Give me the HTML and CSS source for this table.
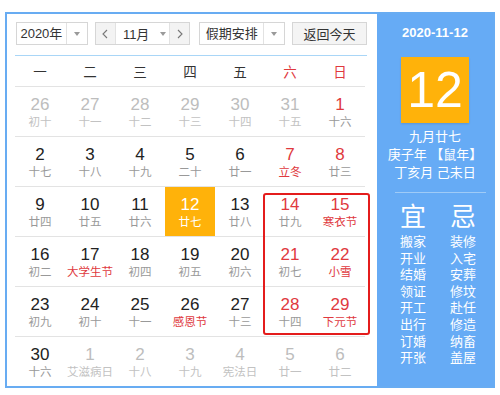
FILE: index.html
```html
<!DOCTYPE html>
<html lang="zh-CN">
<head>
<meta charset="utf-8">
<link rel="stylesheet" href="styles.css">
</head>
<body>
<div class="cal">
  <div class="main">
    <div class="toolbar">
      <div class="sel sel-year"><span class="sel-text">2020年</span><span class="sel-arrow"><i class="tri"></i></span></div>
      <div class="sel sel-month">
        <span class="nav"><svg width="6" height="10" viewBox="0 0 6 10"><polyline points="5,1 1,5 5,9" fill="none" stroke="#777" stroke-width="1.1"/></svg></span>
        <span class="month-text">11月<i class="tri"></i></span>
        <span class="nav"><svg width="6" height="10" viewBox="0 0 6 10"><polyline points="1,1 5,5 1,9" fill="none" stroke="#777" stroke-width="1.1"/></svg></span>
      </div>
      <div class="sel sel-hol"><span class="sel-text">假期安排</span><span class="sel-arrow"><i class="tri"></i></span></div>
      <div class="btn">返回今天</div>
    </div>
    <div class="weekdays">
      <span>一</span><span>二</span><span>三</span><span>四</span><span>五</span><span class="red">六</span><span class="red">日</span>
    </div>
    <div class="grid">
      <div class="cell other"><b>26</b><small>初十</small></div>
      <div class="cell other"><b>27</b><small>十一</small></div>
      <div class="cell other"><b>28</b><small>十二</small></div>
      <div class="cell other"><b>29</b><small>十三</small></div>
      <div class="cell other"><b>30</b><small>十四</small></div>
      <div class="cell other"><b>31</b><small>十五</small></div>
      <div class="cell wk"><b>1</b><small>十六</small></div>

      <div class="cell"><b>2</b><small>十七</small></div>
      <div class="cell"><b>3</b><small>十八</small></div>
      <div class="cell"><b>4</b><small>十九</small></div>
      <div class="cell"><b>5</b><small>二十</small></div>
      <div class="cell"><b>6</b><small>廿一</small></div>
      <div class="cell wk"><b>7</b><small class="fest">立冬</small></div>
      <div class="cell wk"><b>8</b><small>廿三</small></div>

      <div class="cell"><b>9</b><small>廿四</small></div>
      <div class="cell"><b>10</b><small>廿五</small></div>
      <div class="cell"><b>11</b><small>廿六</small></div>
      <div class="cell today"><b>12</b><small>廿七</small></div>
      <div class="cell"><b>13</b><small>廿八</small></div>
      <div class="cell wk"><b>14</b><small>廿九</small></div>
      <div class="cell wk"><b>15</b><small class="fest">寒衣节</small></div>

      <div class="cell"><b>16</b><small>初二</small></div>
      <div class="cell"><b>17</b><small class="fest">大学生节</small></div>
      <div class="cell"><b>18</b><small>初四</small></div>
      <div class="cell"><b>19</b><small>初五</small></div>
      <div class="cell"><b>20</b><small>初六</small></div>
      <div class="cell wk"><b>21</b><small>初七</small></div>
      <div class="cell wk"><b>22</b><small class="fest">小雪</small></div>

      <div class="cell"><b>23</b><small>初九</small></div>
      <div class="cell"><b>24</b><small>初十</small></div>
      <div class="cell"><b>25</b><small>十一</small></div>
      <div class="cell"><b>26</b><small class="fest">感恩节</small></div>
      <div class="cell"><b>27</b><small>十三</small></div>
      <div class="cell wk"><b>28</b><small>十四</small></div>
      <div class="cell wk"><b>29</b><small class="fest">下元节</small></div>

      <div class="cell last"><b>30</b><small>十六</small></div>
      <div class="cell last other"><b>1</b><small>艾滋病日</small></div>
      <div class="cell last other"><b>2</b><small>十八</small></div>
      <div class="cell last other"><b>3</b><small>十九</small></div>
      <div class="cell last other"><b>4</b><small>宪法日</small></div>
      <div class="cell last other"><b>5</b><small>廿一</small></div>
      <div class="cell last other"><b>6</b><small>廿二</small></div>

      <div class="holiday-box"></div>
    </div>
  </div>
  <div class="side">
    <div class="side-date">2020-11-12</div>
    <div class="big-day">12</div>
    <div class="lunar">九月廿七</div>
    <div class="lunar">庚子年 【鼠年】</div>
    <div class="lunar">丁亥月 己未日</div>
    <div class="side-line"></div>
    <div class="yj">
      <div class="yj-col">
        <div class="yj-head">宜</div>
        <div>搬家</div><div>开业</div><div>结婚</div><div>领证</div><div>开工</div><div>出行</div><div>订婚</div><div>开张</div>
      </div>
      <div class="yj-col">
        <div class="yj-head">忌</div>
        <div>装修</div><div>入宅</div><div>安葬</div><div>修坟</div><div>赴任</div><div>修造</div><div>纳畜</div><div>盖屋</div>
      </div>
    </div>
  </div>
</div>
</body>
</html>
```

FILE: styles.css
```css
* { box-sizing: border-box; }
html, body { margin: 0; padding: 0; background: #fff; }
body {
  font-family: "Liberation Sans", "Noto Sans CJK SC", Arial, sans-serif;
  color: #333;
}
.cal {
  margin: 12px 0 0 5px;
  width: 490px;
  height: 376px;
  border: 2px solid #68acf2;
  display: flex;
}
.main {
  width: 370px;
  padding: 0 10px 0 8px;
}
.toolbar {
  display: flex;
  align-items: center;
  padding: 8px 0 10px 1px;
  border-bottom: 1px solid #a9d6f7;
  font-size: 13px;
  color: #333;
}
.sel {
  height: 23px;
  border: 1px solid #d6d6d6;
  display: flex;
  align-items: stretch;
  background: #fff;
}
.sel-year { width: 72px; }
.sel-hol { width: 86px; margin-left: 9px; }
.sel-month { width: 96px; margin-left: 7px; }
.sel-text {
  flex: 1;
  display: flex;
  align-items: center;
  justify-content: center;
  line-height: 21px;
}
.sel-arrow {
  width: 21px;
  border-left: 1px solid #e2e2e2;
  display: flex;
  align-items: center;
  justify-content: center;
}
.tri {
  display: inline-block;
  width: 0;
  height: 0;
  border-left: 3.5px solid transparent;
  border-right: 3.5px solid transparent;
  border-top: 4px solid #9a9a9a;
}
.nav {
  width: 20px;
  background: #f3f3f3;
  display: flex;
  align-items: center;
  justify-content: center;
}
.nav:first-child { border-right: 1px solid #e2e2e2; }
.nav:last-child { border-left: 1px solid #e2e2e2; }
.month-text {
  flex: 1;
  display: flex;
  align-items: center;
  justify-content: center;
  gap: 11px;
  padding-left: 4px;
}
.btn {
  margin-left: 7px;
  width: 75px;
  height: 23px;
  border: 1px solid #d6d6d6;
  background: #f4f4f4;
  display: flex;
  align-items: center;
  justify-content: center;
}
.weekdays {
  display: grid;
  grid-template-columns: repeat(7, 50px);
  height: 31px;
  border-bottom: 1px solid #e3e3e3;
  font-size: 13.5px;
  align-items: center;
  text-align: center;
  color: #333;
  width: 350px;
}
.weekdays .red { color: #e0393e; }
.grid {
  position: relative;
  display: grid;
  grid-template-columns: repeat(7, 50px);
  grid-auto-rows: 50px;
  width: 350px;
}
.cell {
  border-bottom: 1px solid #e3e3e3;
  text-align: center;
  padding-top: 8px;
}
.cell.last { border-bottom: 0; }
.cell b {
  display: block;
  font-weight: normal;
  font-size: 17px;
  line-height: 20px;
  color: #222;
}
.cell small {
  display: block;
  font-size: 11.5px;
  line-height: 14px;
  color: #999;
  white-space: nowrap;
}
.cell.wk b { color: #e0393e; }
.cell small.fest { color: #e0393e; }
.cell.other b { color: #bdbdbd; }
.cell.other small { color: #c2c2c2; }
.cell.today { background: #ffb20a; }
.cell.today b, .cell.today small { color: #fff; }
.holiday-box {
  position: absolute;
  left: 248px;
  top: 106px;
  width: 107px;
  height: 142px;
  border: 2px solid #e41c1c;
  border-radius: 3px;
}
.side {
  width: 116px;
  background: #66abf5;
  color: #fff;
  text-align: center;
  padding-top: 10px;
}
.side-date {
  font-weight: bold;
  font-size: 13px;
  line-height: 18px;
}
.big-day {
  width: 68px;
  height: 66px;
  margin: 15px auto 0;
  background: #ffb20a;
  font-size: 50px;
  line-height: 66px;
  color: #fff;
  box-shadow: 0 1px 2px rgba(0, 0, 0, 0.12);
}
.lunar {
  font-size: 13px;
  line-height: 18px;
}
.big-day + .lunar { margin-top: 5px; }
.side-line {
  height: 1px;
  margin: 10px 7px 0 18px;
  background: #9fcbf7;
}
.yj {
  display: grid;
  grid-template-columns: 50px 50px;
  padding-left: 11px;
  margin-top: 9px;
  font-size: 13px;
  line-height: 16.6px;
}
.yj-head {
  font-size: 26px;
  line-height: 30px;
  margin-bottom: 2px;
}
```
